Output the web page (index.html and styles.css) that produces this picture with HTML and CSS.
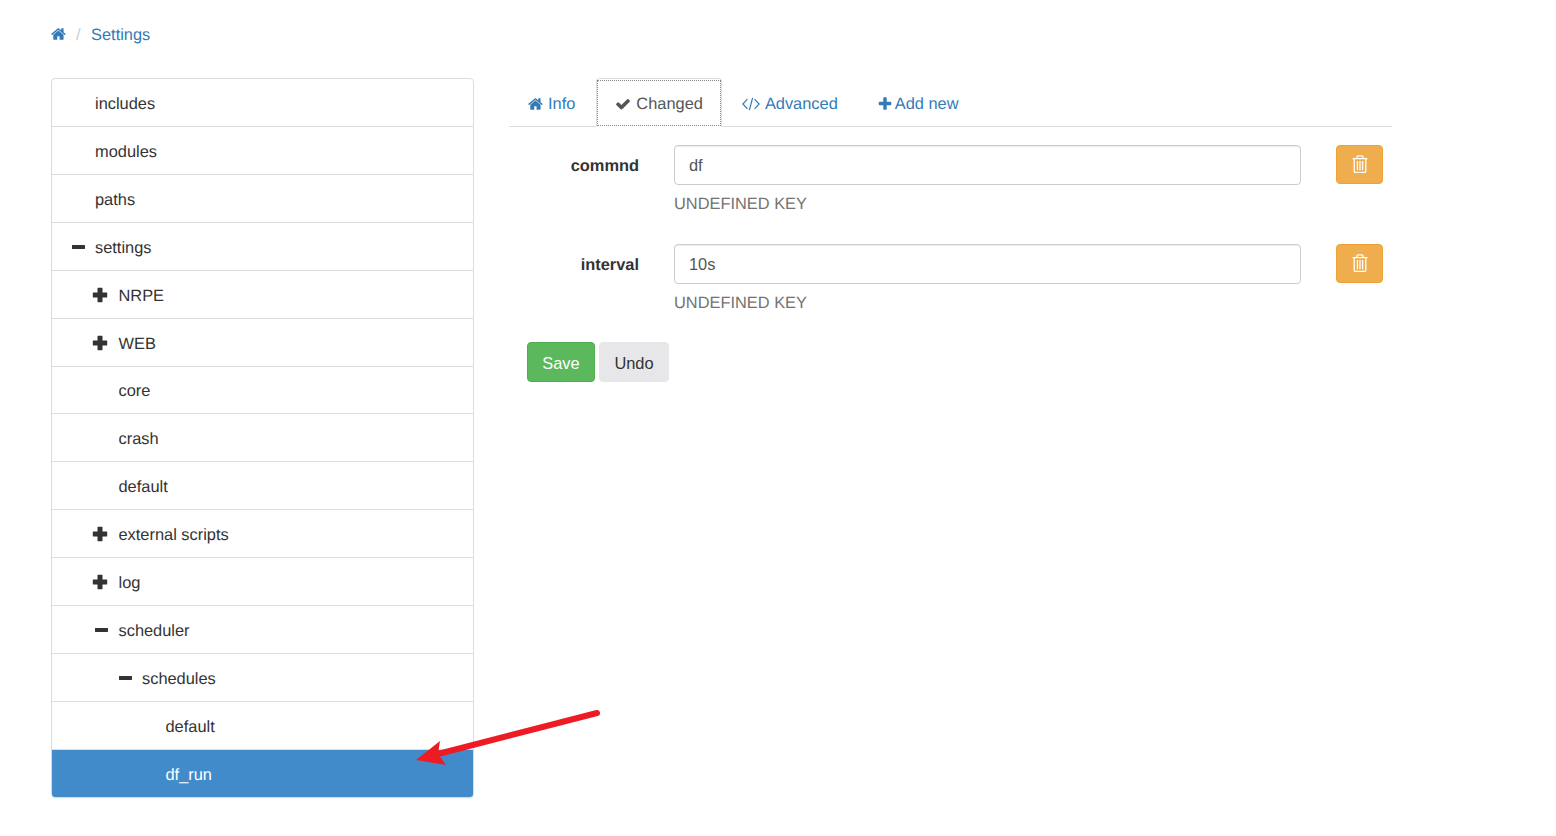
FILE: index.html
```html
<!DOCTYPE html>
<html lang="en">
<head>
<meta charset="utf-8">
<title>Settings</title>
<link rel="stylesheet" href="styles.css">
</head>
<body>
<svg class="defs" width="0" height="0" aria-hidden="true">
  <symbol id="i-home" viewBox="0 0 1792 1792"><path d="M1408 992v480q0 26-19 45t-45 19h-384v-384h-256v384h-384q-26 0-45-19t-19-45v-480q0-1 .5-3t.5-3l575-474 575 474q1 2 1 6zm223-69l-62 74q-8 9-21 11h-3q-13 0-21-7l-692-577-692 577q-12 8-24 7-13-2-21-11l-62-74q-8-10-7-23.5t11-20.5l719-599q32-26 76-26t76 26l244 204v-195q0-14 9-23t23-9h192q14 0 23 9t9 23v408l219 182q10 8 11 21.5t-7 23.5z"/></symbol>
  <symbol id="i-check" viewBox="0 0 1792 1792"><path d="M1671 566q0 40-28 68l-724 724-136 136q-28 28-68 28t-68-28l-136-136-362-362q-28-28-28-68t28-68l136-136q28-28 68-28t68 28l294 295 656-657q28-28 68-28t68 28l136 136q28 28 28 68z"/></symbol>
  <symbol id="i-plus" viewBox="0 0 1792 1792"><path d="M1600 736v192q0 40-28 68t-68 28h-416v416q0 40-28 68t-68 28h-192q-40 0-68-28t-28-68v-416h-416q-40 0-68-28t-28-68v-192q0-40 28-68t68-28h416v-416q0-40 28-68t68-28h192q40 0 68 28t28 68v416h416q40 0 68 28t28 68z"/></symbol>
  <symbol id="i-tplus" viewBox="0 0 16 16"><path d="M5.9 .8h4.2q.4 0 .4 .4v4.3h4.3q.4 0 .4 .4v4.2q0 .4-.4 .4h-4.3v4.3q0 .4-.4 .4h-4.2q-.4 0-.4-.4v-4.3h-4.3q-.4 0-.4-.4v-4.2q0-.4 .4-.4h4.3v-4.3q0-.4 .4-.4z"/></symbol>
  <symbol id="i-tminus" viewBox="0 0 16 16"><path d="M3.4 6h12.2q.4 0 .4 .4v3.2q0 .4-.4 .4h-12.2q-.4 0-.4-.4v-3.2q0-.4 .4-.4z"/></symbol>
  <symbol id="i-trash" viewBox="0 0 16 18"><path class="trash-lines" d="M.6 3.7h14.8M5 3.4V2q0-1.2 1.2-1.2h3.6Q11 .8 11 2v1.4M2.2 3.7v12.5q0 1.2 1.2 1.2h9.2q1.2 0 1.2-1.2V3.7M5.4 6v9.2M8 6v9.2M10.6 6v9.2"/></symbol>
</svg>

<nav class="breadcrumb">
  <a href="#" class="crumb-home"><svg class="icon icon-home"><use href="#i-home"/></svg></a>
  <span class="crumb-sep">/</span>
  <a href="#" class="crumb-link">Settings</a>
</nav>

<main class="layout">
  <ul class="tree">
    <li class="tree-item lv0"><span class="tw"></span>includes</li>
    <li class="tree-item lv0"><span class="tw"></span>modules</li>
    <li class="tree-item lv0"><span class="tw"></span>paths</li>
    <li class="tree-item lv0"><span class="tw"><svg class="icon tree-icon"><use href="#i-tminus"/></svg></span>settings</li>
    <li class="tree-item lv1"><span class="tw"><svg class="icon tree-icon"><use href="#i-tplus"/></svg></span>NRPE</li>
    <li class="tree-item lv1"><span class="tw"><svg class="icon tree-icon"><use href="#i-tplus"/></svg></span>WEB</li>
    <li class="tree-item lv1"><span class="tw"></span>core</li>
    <li class="tree-item lv1"><span class="tw"></span>crash</li>
    <li class="tree-item lv1"><span class="tw"></span>default</li>
    <li class="tree-item lv1"><span class="tw"><svg class="icon tree-icon"><use href="#i-tplus"/></svg></span>external scripts</li>
    <li class="tree-item lv1"><span class="tw"><svg class="icon tree-icon"><use href="#i-tplus"/></svg></span>log</li>
    <li class="tree-item lv1"><span class="tw"><svg class="icon tree-icon"><use href="#i-tminus"/></svg></span>scheduler</li>
    <li class="tree-item lv2"><span class="tw"><svg class="icon tree-icon"><use href="#i-tminus"/></svg></span>schedules</li>
    <li class="tree-item lv3"><span class="tw"></span>default</li>
    <li class="tree-item lv3 selected"><span class="tw"></span>df_run</li>
  </ul>

  <section class="content">
    <div class="tabs">
      <a href="#" class="tab"><svg class="icon icon-tab icon-info"><use href="#i-home"/></svg>Info</a>
      <a href="#" class="tab active"><span class="tab-focus"><svg class="icon icon-check"><use href="#i-check"/></svg>Changed</span></a>
      <a href="#" class="tab"><svg class="icon icon-code" viewBox="0 0 18 16"><path d="M5.4 3.2 .9 8l4.5 4.8M12.6 3.2 17.1 8l-4.5 4.8M10.6 1.8 7.4 14.2"/></svg>Advanced</a>
      <a href="#" class="tab"><svg class="icon icon-tab icon-plus"><use href="#i-plus"/></svg>Add new</a>
    </div>

    <form class="form">
      <div class="form-row">
        <label class="form-label">commnd</label>
        <div class="form-field">
          <input class="form-input" type="text" value="df">
          <p class="help">UNDEFINED KEY</p>
        </div>
        <button type="button" class="btn btn-delete"><svg class="icon icon-trash"><use href="#i-trash"/></svg></button>
      </div>
      <div class="form-row">
        <label class="form-label">interval</label>
        <div class="form-field">
          <input class="form-input" type="text" value="10s">
          <p class="help">UNDEFINED KEY</p>
        </div>
        <button type="button" class="btn btn-delete"><svg class="icon icon-trash"><use href="#i-trash"/></svg></button>
      </div>
      <div class="form-actions">
        <button type="button" class="btn btn-save">Save</button>
        <button type="button" class="btn btn-undo">Undo</button>
      </div>
    </form>
  </section>
</main>

<svg class="arrow" width="200" height="70" viewBox="0 0 200 70" aria-hidden="true">
  <path class="arrow-line" d="M197 6 38 47"/>
  <path class="arrow-head" d="M16 53 40 34 38 47 46 58Z"/>
</svg>
</body>
</html>
```
FILE: styles.css
```css
* { box-sizing: border-box; }
html, body { margin: 0; padding: 0; }
body {
  position: relative;
  height: 836px;
  overflow: hidden;
  background: #fff;
  color: #333;
  font-family: "Liberation Sans", Arial, sans-serif;
  font-size: 16.4px;
  line-height: 23px;
  text-rendering: geometricPrecision;
  padding: 23px 0 0 51px;
}
a { color: #337ab7; text-decoration: none; }
.defs { position: absolute; }
.icon { display: inline-block; fill: currentColor; flex: none; }

.breadcrumb { display: flex; align-items: center; height: 23px; }
.icon-home { width: 16px; height: 16px; }
.crumb-home { display: flex; margin-top: -1px; }
.crumb-sep { color: #ccc; margin: 2px 10.5px 0 9px; }
.crumb-link { margin-top: 2px; }

.layout { display: flex; align-items: flex-start; gap: 35px; margin-top: 32px; }

.tree {
  width: 423px;
  list-style: none;
  margin: 0;
  padding: 0;
  border: 1px solid #ddd;
  border-radius: 4px;
  overflow: hidden;
  box-shadow: 0 1px 1px rgba(0,0,0,.05);
}
.tree-item {
  display: flex;
  align-items: center;
  height: 47.93px;
  padding-top: 4px;
  padding-right: 15px;
  border-bottom: 1px solid #ddd;
}
.tree-item:last-child { border-bottom: 0; height: 47px; }
.tw { display: flex; align-items: center; width: 16px; height: 16px; margin: -3px 10.5px 0 -.5px; }
.tree-icon { width: 16px; height: 16px; }
.lv0 { padding-left: 17px; }
.lv1 { padding-left: 40.5px; }
.lv2 { padding-left: 64px; }
.lv3 { padding-left: 87.5px; }
.selected { background: #428bca; color: #fff; }

.content { width: 883px; }
.tabs { display: flex; height: 49px; border-bottom: 1px solid #ddd; padding-left: 3px; }
.tab {
  display: flex;
  align-items: center;
  height: 48px;
  padding: 4px 15px 0;
  margin-right: 4px;
  border: 1px solid transparent;
  border-radius: 4px 4px 0 0;
}
.tab:first-child { margin-right: 5px; }
.tab.active {
  height: 49px;
  padding: 0;
  color: #555;
  background: #fff;
  border-color: #ddd #ddd #fff;
}
.tab-focus {
  display: flex;
  align-items: center;
  height: 46px;
  margin-top: 1px;
  padding: 2px 18px 0;
  outline: 1px dotted #888;
  outline-offset: -1px;
}
.icon-tab { width: 16px; height: 16px; margin-right: 3px; }
.icon-info { margin-right: 4px; }
.icon-check { width: 16px; height: 16px; margin-right: 5px; }
.icon-code { width: 18px; height: 16px; margin-right: 5px; fill: none; stroke: currentColor; stroke-width: 1.2; }
.icon-plus { margin: 0 2px 0 3px; }

.form { padding-top: 18px; }
.form-row { display: flex; align-items: flex-start; height: 99px; }
.form-label {
  width: 130px;
  text-align: right;
  font-weight: 700;
  line-height: 43px;
  margin-right: 35px;
}
.form-field { width: 627px; }
.form-input {
  display: block;
  width: 100%;
  height: 40px;
  padding: 6px 14px;
  border: 1px solid #ccc;
  border-radius: 4px;
  color: #555;
  font: inherit;
  box-shadow: inset 0 1px 1px rgba(0,0,0,.075);
}
.help { margin: 8px 0 0; color: #737373; }

.btn {
  border: 1px solid transparent;
  border-radius: 4px;
  font: inherit;
  padding: 2px 0 0;
  display: flex;
  align-items: center;
  justify-content: center;
}
.btn-delete { width: 47px; height: 39px; margin-left: 35px; padding: 0; background: #f0ad4e; border-color: #eea236; color: #fff; }
.icon-trash { width: 16px; height: 18px; margin-top: -1px; }
.trash-lines { fill: none; stroke: currentColor; stroke-width: 1.3; }
.form-actions { display: flex; gap: 4px; margin: -1px 0 0 18px; }
.btn-save { width: 68px; height: 40px; background: #5cb85c; border-color: #4cae4c; color: #fff; }
.btn-undo { width: 70px; height: 40px; background: #e7e7ea; border-color: #e7e7ea; color: #333; }

.arrow { position: absolute; left: 400px; top: 707px; }
.arrow-line { fill: none; stroke: #ed1c24; stroke-width: 6; stroke-linecap: round; }
.arrow-head { fill: #ed1c24; }
```
